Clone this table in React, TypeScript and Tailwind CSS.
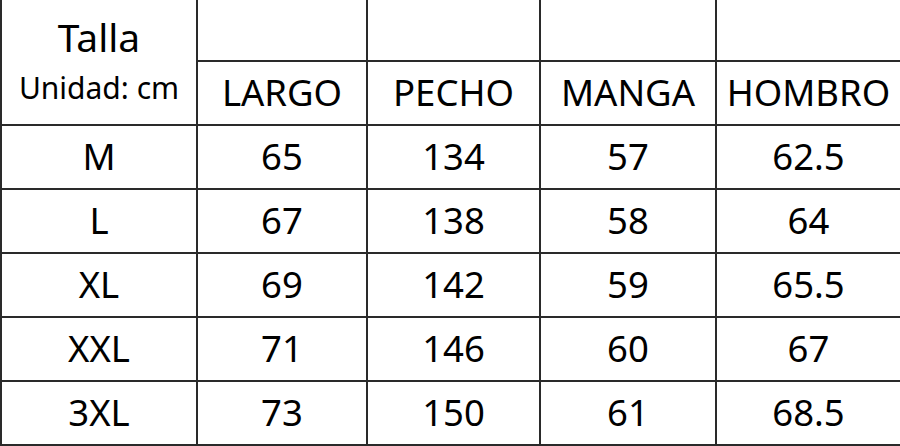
const headers = ["LARGO", "PECHO", "MANGA", "HOMBRO"];

const rows = [
  ["M", "65", "134", "57", "62.5"],
  ["L", "67", "138", "58", "64"],
  ["XL", "69", "142", "59", "65.5"],
  ["XXL", "71", "146", "60", "67"],
  ["3XL", "73", "150", "61", "68.5"],
];

const cell = "flex items-center justify-center border-r-2 border-b-2 border-[#2a2a2a]";

export default function App() {
  return (
    <div
      className="w-[900px] h-[446px] bg-white text-black overflow-hidden"
      style={{ fontFamily: '"Noto Sans", "Open Sans", sans-serif' }}
    >
      <div className="grid grid-cols-[196px_170px_173px_176px_185px] grid-rows-[62px_64px_64px_64px_64px_64px_64px] border-l-2 border-[#2a2a2a] w-[904px]">
        <div className="row-span-2 flex flex-col items-center border-r-2 border-b-2 border-[#2a2a2a] pt-[15px]">
          <span className="text-[39px] leading-[44px]">Talla</span>
          <span className="text-[30px] leading-[36px] mt-[11px]">Unidad: cm</span>
        </div>
        {headers.map((h) => (
          <div key={h + "-top"} className="border-r-2 border-b-2 border-[#2a2a2a]" />
        ))}
        {headers.map((h) => (
          <div key={h} className={`${cell} text-[36.5px] pb-[2px]`}>
            {h}
          </div>
        ))}
        {rows.map((r) =>
          r.map((v, i) => (
            <div key={r[0] + i} className={`${cell} text-[36.5px] pb-[2px]`}>
              {v}
            </div>
          ))
        )}
      </div>
    </div>
  );
}
